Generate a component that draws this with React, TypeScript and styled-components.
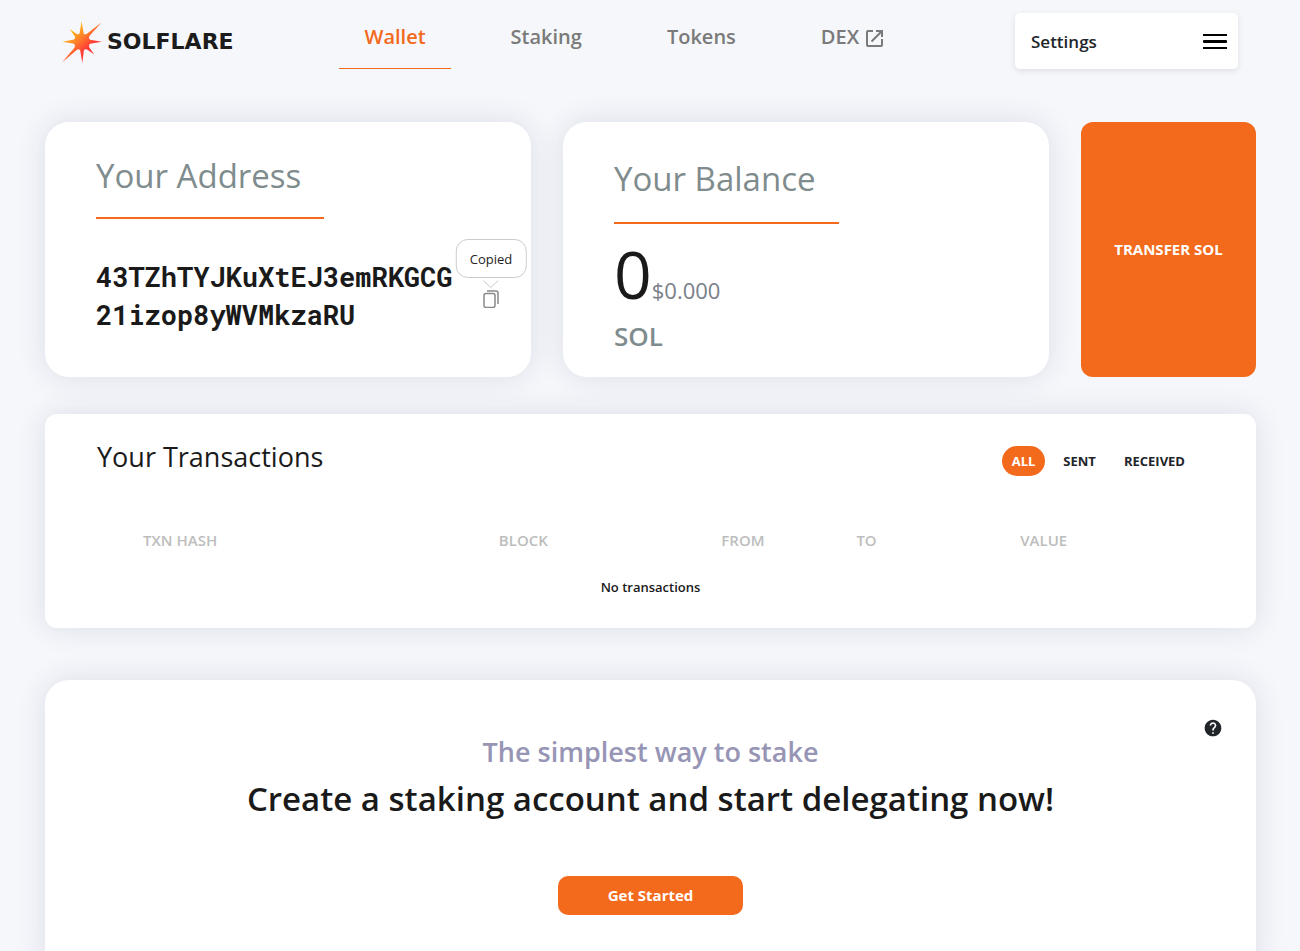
import React from "react";
import styled, { createGlobalStyle } from "styled-components";

const orange = "#f36a1d";

const GlobalStyle = createGlobalStyle`
  * {
    box-sizing: border-box;
  }
  body {
    margin: 0;
    background: #f5f7fb;
    color: #1a1a1a;
    font-family: "Open Sans", "Noto Sans", sans-serif;
  }
  button {
    border: 0;
    background: none;
    padding: 0;
    color: inherit;
    font-family: inherit;
    cursor: pointer;
  }
  h1, h2, h3, p {
    margin: 0;
  }
`;

const Page = styled.div`
  padding: 13px 44px 0 45px;
`;

const Header = styled.header`
  display: flex;
  justify-content: space-between;
  align-items: flex-start;
  padding: 0 18px 0 17px;
`;

const Logo = styled.a`
  display: flex;
  align-items: center;
  gap: 4px;
  height: 58px;
  color: #1c1c1c;
  text-decoration: none;
  font: bold 22px/24px "DejaVu Sans", sans-serif;
`;

const Nav = styled.nav`
  display: flex;
  gap: 35px;
`;

const NavLink = styled.a<{ $active?: boolean }>`
  display: flex;
  gap: 5px;
  height: 56px;
  padding: 10px 25px 0;
  border-bottom: 1px solid ${(p) => (p.$active ? orange : "transparent")};
  color: ${(p) => (p.$active ? orange : "#7a7a7a")};
  font-size: 20px;
  font-weight: 600;
  line-height: 28px;
  text-decoration: none;

  svg {
    margin-top: 5px;
  }
`;

const SettingsButton = styled.button`
  display: flex;
  align-items: center;
  justify-content: space-between;
  width: 223px;
  height: 56px;
  padding: 0 11px 0 16px;
  border-radius: 5px;
  background: #fff;
  box-shadow: 0 2px 6px rgba(0, 0, 0, 0.1);
  color: #212529;
  font-size: 17px;
  font-weight: 600;
`;

const Main = styled.main`
  padding-top: 51px;
`;

const Overview = styled.div`
  display: grid;
  grid-template-columns: 1fr 1fr 175px;
  gap: 32px;
`;

const Card = styled.section<{ $radius: number }>`
  border-radius: ${(p) => p.$radius}px;
  background: #fff;
  box-shadow: 0 0 30px rgba(40, 40, 90, 0.12);
`;

const AddressCard = styled(Card)`
  padding: 30px 32px 40px 51px;
`;

const BalanceCard = styled(Card)`
  padding: 33px 32px 22px 51px;
`;

const CardTitle = styled.h2<{ $gap: number }>`
  width: fit-content;
  padding: 0 23px ${(p) => p.$gap}px 0;
  border-bottom: 2px solid ${orange};
  color: #7f8c8d;
  font-size: 33px;
  font-weight: 400;
  line-height: 48px;
`;

const AddressRow = styled.div`
  display: flex;
  align-items: flex-start;
  gap: 30px;
  margin-top: 39px;
`;

const Address = styled.p`
  width: 357px;
  font: bold 27px/38px "Roboto Mono", "Liberation Mono", monospace;
  word-break: break-all;
`;

const CopyButton = styled.button`
  position: relative;
  display: flex;
  width: 16px;
  height: 18px;
  margin-top: 32px;
`;

const Tooltip = styled.span`
  position: absolute;
  bottom: 30px;
  left: 50%;
  transform: translateX(-50%);
  padding: 10px 13px 8px;
  border: 1px solid #ccc;
  border-radius: 12px;
  background: #fff;
  color: #222;
  font-size: 13px;
  line-height: 19px;

  svg {
    position: absolute;
    top: 40px;
    left: 50%;
    transform: translateX(-50%);
  }
`;

const Balance = styled.p`
  display: flex;
  align-items: baseline;
  height: 93px;
  font-size: 66px;
  line-height: 98px;
`;

const Fiat = styled.span`
  color: #7a8088;
  font-size: 22px;
`;

const Currency = styled.p`
  color: #7f8c8d;
  font-size: 26px;
  font-weight: 600;
  line-height: 38px;
`;

const ActionButton = styled.button`
  padding-bottom: 2px;
  border-radius: 12px;
  background: ${orange};
  color: #fff;
  font-size: 15px;
  font-weight: 700;
`;

const Transactions = styled(Card)`
  margin-top: 37px;
  padding: 24px 52px 17px;
`;

const TransactionsHead = styled.div`
  display: flex;
  justify-content: space-between;
  align-items: flex-start;
`;

const TransactionsTitle = styled.h2`
  font-size: 27px;
  font-weight: 400;
  line-height: 38px;
`;

const Filters = styled.div`
  display: flex;
  gap: 8px;
  padding: 8px 9px 0 0;
`;

const Filter = styled.button<{ $active?: boolean }>`
  height: 30px;
  padding: 0 10px;
  border-radius: 15px;
  background: ${(p) => (p.$active ? orange : "transparent")};
  color: ${(p) => (p.$active ? "#fff" : "#212529")};
  font-size: 13px;
  font-weight: 700;
`;

const Table = styled.table`
  width: 100%;
  margin-top: 41px;
  border-collapse: collapse;
  table-layout: fixed;
`;

const HeadCell = styled.th<{ $width: string }>`
  width: ${(p) => p.$width};
  height: 46px;
  padding: 0;
  color: #bdbdbd;
  font-size: 15px;
  font-weight: 600;
  text-align: left;

  &:first-child {
    padding-left: 46px;
  }
`;

const EmptyCell = styled.td`
  height: 48px;
  padding: 0;
  font-size: 13px;
  font-weight: 600;
  text-align: center;
`;

const Stake = styled(Card)`
  position: relative;
  display: flex;
  flex-direction: column;
  align-items: center;
  margin-top: 52px;
  padding: 52px 32px 60px;
`;

const HelpButton = styled.button`
  position: absolute;
  top: 38px;
  right: 33px;
  display: flex;
`;

const StakeTagline = styled.p`
  color: #9795b5;
  font-size: 27px;
  font-weight: 600;
  line-height: 40px;
`;

const StakeTitle = styled.h2`
  margin-top: 3px;
  font-size: 33px;
  font-weight: 600;
  line-height: 48px;
`;

const StartButton = styled(ActionButton)`
  width: 185px;
  height: 39px;
  margin-top: 53px;
  border-radius: 10px;
`;

const columns = [
  { label: "TXN HASH", width: "36.3%" },
  { label: "BLOCK", width: "20.1%" },
  { label: "FROM", width: "12.2%" },
  { label: "TO", width: "14.8%" },
  { label: "VALUE", width: "16.6%" },
];

const FlareIcon = () => (
  <svg width="41" height="42" viewBox="0 0 41 42" aria-hidden="true">
    <defs>
      <linearGradient id="flare" x1="6" y1="6" x2="30" y2="32" gradientUnits="userSpaceOnUse">
        <stop offset="0.1" stopColor="#ffc512" />
        <stop offset="0.5" stopColor="#ff7a2b" />
        <stop offset="0.8" stopColor="#ff3c36" />
      </linearGradient>
    </defs>
    <path
      fill="url(#flare)"
      d="M19.5 0L21.8 12.8Q23.5 14 25.2 12.4L39.5 1.5L27.2 15.2Q26.2 17.5 28 18.7L40 20.8L28.2 22.8Q26.2 24 27.2 26.2L32.2 33.4L25 28.6Q22.5 27.8 21.9 29.6L20.3 42L18.2 29.6Q17 27.6 15 28.8L0 41.5L12.6 26.6Q13.6 24 12 22.8L0.5 20.8L12 18.6Q13.8 17.2 12.8 15.2L7.4 7.8L14.8 12.9Q17 13.8 17.7 12Z"
    />
  </svg>
);

const App = () => (
  <>
    <GlobalStyle />
    <Page>
      <Header>
        <Logo href="#">
          <FlareIcon />
          SOLFLARE
        </Logo>
        <Nav>
          <NavLink href="#wallet" $active>
            Wallet
          </NavLink>
          <NavLink href="#staking">Staking</NavLink>
          <NavLink href="#tokens">Tokens</NavLink>
          <NavLink href="#dex">
            DEX
            <svg width="20" height="20" viewBox="0 0 20 20" fill="none" stroke="currentColor" strokeWidth="2" aria-hidden="true">
              <path d="M9 3H4Q3 3 3 4V17Q3 18 4 18H17Q18 18 18 17V11M12 3H18V9M18 3L7.5 13.5" />
            </svg>
          </NavLink>
        </Nav>
        <SettingsButton>
          Settings
          <svg width="24" height="15" viewBox="0 0 24 15" fill="#000" aria-hidden="true">
            <rect width="24" height="2" />
            <rect y="6" width="24" height="3" rx="1" />
            <rect y="13" width="24" height="2" />
          </svg>
        </SettingsButton>
      </Header>

      <Main>
        <Overview>
          <AddressCard $radius={24}>
            <CardTitle $gap={17}>Your Address</CardTitle>
            <AddressRow>
              <Address>43TZhTYJKuXtEJ3emRKGCG21izop8yWVMkzaRU</Address>
              <CopyButton aria-label="Copy address">
                <svg width="16" height="18" viewBox="0 0 16 18" fill="none" stroke="#8a8a8a" aria-hidden="true">
                  <rect x="1" y="3.5" width="11" height="14" rx="2" strokeWidth="1.5" />
                  <path d="M4 1H13Q15 1 15 3V14" strokeWidth="1.5" />
                </svg>
                <Tooltip role="status">
                  Copied
                  <svg width="16" height="8" viewBox="0 0 16 8" fill="none" stroke="#ccc" aria-hidden="true">
                    <path d="M0.5 0.5L8 7.5L15.5 0.5" />
                  </svg>
                </Tooltip>
              </CopyButton>
            </AddressRow>
          </AddressCard>
          <BalanceCard $radius={24}>
            <CardTitle $gap={19}>Your Balance</CardTitle>
            <Balance>
              0<Fiat>$0.000</Fiat>
            </Balance>
            <Currency>SOL</Currency>
          </BalanceCard>
          <ActionButton>TRANSFER SOL</ActionButton>
        </Overview>

        <Transactions $radius={12}>
          <TransactionsHead>
            <TransactionsTitle>Your Transactions</TransactionsTitle>
            <Filters>
              <Filter $active>ALL</Filter>
              <Filter>SENT</Filter>
              <Filter>RECEIVED</Filter>
            </Filters>
          </TransactionsHead>
          <Table>
            <thead>
              <tr>
                {columns.map((column) => (
                  <HeadCell key={column.label} $width={column.width} scope="col">
                    {column.label}
                  </HeadCell>
                ))}
              </tr>
            </thead>
            <tbody>
              <tr>
                <EmptyCell colSpan={columns.length}>No transactions</EmptyCell>
              </tr>
            </tbody>
          </Table>
        </Transactions>

        <Stake $radius={24}>
          <HelpButton aria-label="About staking">
            <svg width="20" height="20" viewBox="0 0 24 24" fill="#212529" aria-hidden="true">
              <path d="M12 2C6.48 2 2 6.48 2 12s4.48 10 10 10 10-4.480 10-10S17.520 2 12 2zm1 17h-2v-2h2v2zm2.070-7.750l-.9.920C13.450 12.900 13 13.500 13 15h-2v-.5c0-1.100.45-2.100 1.170-2.830l1.240-1.260c.37-.36.590-.86.590-1.410 0-1.100-.9-2-2-2s-2 .9-2 2H8c0-2.210 1.790-4 4-4s4 1.790 4 4c0 .88-.36 1.680-.93 2.250z" />
            </svg>
          </HelpButton>
          <StakeTagline>The simplest way to stake</StakeTagline>
          <StakeTitle>Create a staking account and start delegating now!</StakeTitle>
          <StartButton>Get Started</StartButton>
        </Stake>
      </Main>
    </Page>
  </>
);

export default App;
